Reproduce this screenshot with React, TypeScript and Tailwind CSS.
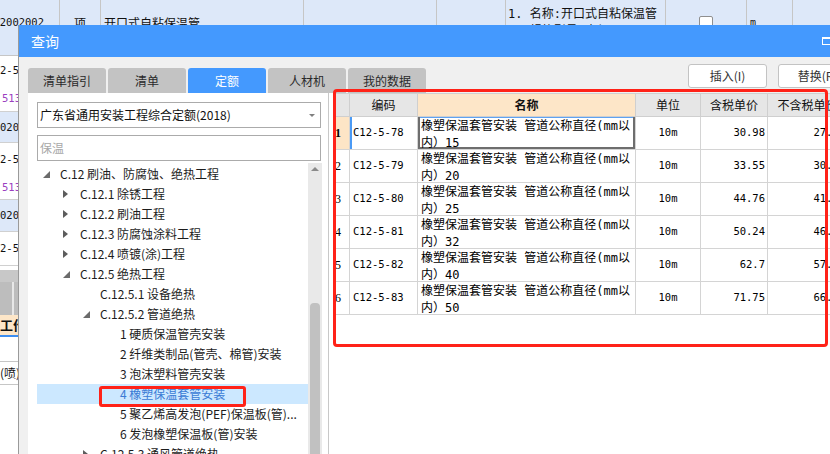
import React from 'react';

type TreeItem = { label: string; level: number; arrow?: 'open' | 'closed'; active?: boolean };

const TREE: TreeItem[] = [
  { label: 'C.12 刷油、防腐蚀、绝热工程', level: 0, arrow: 'open' },
  { label: 'C.12.1 除锈工程', level: 1, arrow: 'closed' },
  { label: 'C.12.2 刷油工程', level: 1, arrow: 'closed' },
  { label: 'C.12.3 防腐蚀涂料工程', level: 1, arrow: 'closed' },
  { label: 'C.12.4 喷镀(涂)工程', level: 1, arrow: 'closed' },
  { label: 'C.12.5 绝热工程', level: 1, arrow: 'open' },
  { label: 'C.12.5.1 设备绝热', level: 2 },
  { label: 'C.12.5.2 管道绝热', level: 2, arrow: 'open' },
  { label: '1 硬质保温管壳安装', level: 3 },
  { label: '2 纤维类制品(管壳、棉管)安装', level: 3 },
  { label: '3 泡沫塑料管壳安装', level: 3 },
  { label: '4 橡塑保温套管安装', level: 3, active: true },
  { label: '5 聚乙烯高发泡(PEF)保温板(管)...', level: 3 },
  { label: '6 发泡橡塑保温板(管)安装', level: 3 },
  { label: 'C.12.5.3 通风管道绝热', level: 2, arrow: 'closed' },
];

// one class per tree depth, 20px per level
const INDENT = ['pl-[6px]', 'pl-[26px]', 'pl-[46px]', 'pl-[66px]'];

const ROWS = [
  { code: 'C12-5-78', size: '15', tax: '30.98', noTax: '27.91' },
  { code: 'C12-5-79', size: '20', tax: '33.55', noTax: '30.23' },
  { code: 'C12-5-80', size: '25', tax: '44.76', noTax: '41.06' },
  { code: 'C12-5-81', size: '32', tax: '50.24', noTax: '46.09' },
  { code: 'C12-5-82', size: '40', tax: '62.7', noTax: '57.52' },
  { code: 'C12-5-83', size: '50', tax: '71.75', noTax: '66.13' },
];

const TABS = ['清单指引', '清单', '定额', '人材机', '我的数据'];

const mono = "font-['DejaVu_Sans_Mono','Noto_Sans_CJK_SC',monospace]";

function TreeArrow({ kind }: { kind?: 'open' | 'closed' }) {
  if (kind === 'open')
    return (
      <svg width="7" height="7" viewBox="0 0 7 7" className="mt-[1px]">
        <polygon points="7,0 7,7 0,7" fill="#6b6b6b" />
      </svg>
    );
  if (kind === 'closed')
    return (
      <svg width="5" height="8" viewBox="0 0 5 8">
        <polygon points="0,0 5,4 0,8" fill="#5c5c5c" />
      </svg>
    );
  return null;
}

function Background() {
  const cell = 'h-full border-r border-[#c6c6c6]';
  return (
    <div className="flex flex-col w-full">
      {/* partly hidden row above the dialog */}
      <div className="flex h-[56px] bg-[#dde8f9] border-b border-[#c6c6c6] text-[12px] leading-[17px]">
        <div className={`${cell} w-[60px] pt-[14px] overflow-hidden flex justify-end items-start pr-[15px] ${mono} text-[10.5px]`}>
          <span className="shrink-0 whitespace-nowrap">0302002002</span>
        </div>
        <div className={`${cell} w-[41px] pt-[14px] text-center`}>项</div>
        <div className={`${cell} w-[203px] pt-[14px] pl-[3px]`}>开口式自粘保温管</div>
        <div className={`${cell} w-[133px]`} />
        <div className={`${cell} w-[69px]`} />
        <div className={`${cell} w-[160px] pt-[6px] pl-[2px] ${mono} text-[12px]`}>
          <div>1. 名称:开口式自粘保温管</div>
          <div>2. 规格型号:内径 厚</div>
        </div>
        <div className={`${cell} w-[81px] pt-[16px]`}>
          <div className="mx-auto w-[14px] h-[14px] bg-white border border-[#8f8f8f] rounded-[2px]" />
        </div>
        <div className={`${cell} w-[46px] pt-[14px] pl-[3px] ${mono} text-[10px]`}>m</div>
        <div className="flex-1" />
      </div>
      <div className={`h-[56px] border-b border-[#d0d0d0] ${mono} text-[10.5px] leading-[28px]`}>
        <div>2-5-78</div>
        <div className="pl-[2px] text-[#9b3fbf]">5130101</div>
      </div>
      <div className={`h-[31px] bg-[#dde8f9] border-b border-[#d0d0d0] ${mono} text-[10.5px] leading-[30px]`}>02002001</div>
      <div className={`h-[57px] border-b border-[#d0d0d0] ${mono} text-[10.5px] leading-[28px] pt-[2px]`}>
        <div>2-5-79</div>
        <div className="pl-[2px] text-[#9b3fbf]">5130102</div>
      </div>
      <div className={`h-[32px] bg-[#dde8f9] border-b border-[#d0d0d0] ${mono} text-[10.5px] leading-[30px]`}>02002003</div>
      <div className={`h-[34px] border-b border-[#d0d0d0] ${mono} text-[10.5px] leading-[32px]`}>2-5-80</div>
      <div className="h-[4px]" />
      <div className="h-[12px] bg-[#c8c8c8]" />
      <div className="h-[33px] bg-[#bdbdbd] pl-[12px]">
        <div className="w-[2px] h-full bg-[#e8e8e8]" />
      </div>
      <div className="h-[22px] bg-[#fde6c8] border-b-2 border-[#3d8ef0] text-[13px] font-bold leading-[20px]">工作内容</div>
      <div className="h-[24px]" />
      <div className="h-[24px] border-y border-[#c6c6c6] text-[12px] leading-[22px]">(喷)涂</div>
    </div>
  );
}

function TreePanel() {
  return (
    <div className="w-[300px] h-full bg-white flex flex-col pl-[9px] pr-[6px] pt-[9px]">
      <div className="h-[26px] mr-[1px] border border-[#ababab] flex items-center pl-[2px] pr-[5px] text-[12px] text-[#111]">
        <span className="flex-1">广东省通用安装工程综合定额(2018)</span>
        <svg width="6" height="3" viewBox="0 0 6 3">
          <polygon points="0,0 6,0 3,3" fill="#808080" />
        </svg>
      </div>
      <div className="h-[26px] mt-[7px] mr-[1px] border border-[#ababab] flex items-center pl-[2px] text-[12px] text-[#a8a8a8]">
        保温
      </div>
      <div className="flex-1 flex mt-[2px] min-h-0">
        <div className="flex-1 pt-[1px] overflow-hidden">
          {TREE.map((t) => (
            <div
              key={t.label}
              className={`flex items-center h-[20px] ${INDENT[t.level]} ${t.active ? 'bg-[#cce8ff] text-[#3a7bd5]' : 'text-[#1c1c1c]'}`}
            >
              <span className="w-[17px] flex items-center">
                <TreeArrow kind={t.arrow} />
              </span>
              <span className="text-[12px] whitespace-nowrap">{t.label}</span>
            </div>
          ))}
        </div>
        {/* scrollbar */}
        <div className="w-[14px] bg-[#e9e9e9] flex flex-col items-center">
          <svg width="8" height="4" viewBox="0 0 8 4" className="mt-[4px]">
            <polygon points="4,0 8,4 0,4" fill="#8a8a8a" />
          </svg>
          <div className="h-[132px]" />
          <div className="flex-1 w-[10px] bg-[#c1c1c1] rounded-t-[4px]" />
        </div>
      </div>
    </div>
  );
}

function QuotaGrid() {
  const hd = 'h-full flex items-center justify-center border-r border-[#cfcfcf]';
  const td = 'h-full border-r border-[#d4d4d4]';
  return (
    <div className="flex-1 h-full bg-white border-l border-[#c8c8c8] pl-[5px]">
      <div className="flex h-[24px] border-y border-[#cfcfcf] bg-[#e6e6e6] text-[12px] text-[#111]">
        <div className={`${hd} w-[16px]`} />
        <div className={`${hd} w-[68px]`}>编码</div>
        <div className={`${hd} w-[218px] bg-[#fde6c8] font-bold`}>名称</div>
        <div className={`${hd} w-[65px]`}>单位</div>
        <div className={`${hd} w-[67px]`}>含税单价</div>
        <div className={`${hd} w-[80px] whitespace-nowrap`}>不含税单价</div>
      </div>
      {ROWS.map((r, i) => {
        const first = i === 0;
        return (
          <div key={r.code} className="flex h-[33px] border-b border-[#d4d4d4] text-black">
            <div
              className={`${td} w-[16px] flex items-center pl-[1px] font-['Liberation_Serif',serif] text-[12px] ${first ? 'bg-[#fde5c6] font-bold' : ''}`}
            >
              {i + 1}
            </div>
            <div
              className={`${td} w-[68px] flex items-center pl-[3px] ${mono} text-[10.5px] ${first ? 'shadow-[inset_2px_0_0_#4a9af5]' : ''}`}
            >
              {r.code}
            </div>
            <div
              className={`${td} w-[218px] pl-[3px] pt-[1px] ${mono} text-[12px] leading-[17px] whitespace-nowrap overflow-hidden ${first ? 'shadow-[inset_2px_-2px_0_#6e6e6e,inset_-2px_0_0_#6e6e6e,inset_0_1px_0_#5ea2f2]' : ''}`}
            >
              <div>橡塑保温套管安装 管道公称直径(mm以</div>
              <div>内）{r.size}</div>
            </div>
            <div className={`${td} w-[65px] flex items-center justify-center ${mono} text-[10.5px]`}>10m</div>
            <div className={`${td} w-[67px] flex items-center justify-end pr-[2px] ${mono} text-[10.5px]`}>{r.tax}</div>
            <div className={`${td} w-[80px] flex items-center justify-end pr-[2px] ${mono} text-[10.5px]`}>{r.noTax}</div>
          </div>
        );
      })}
    </div>
  );
}

export default function App() {
  return (
    <div className="relative w-[830px] h-[454px] overflow-hidden bg-white font-['Noto_Sans_CJK_SC',sans-serif] text-[#111]">
      <Background />

      {/* 查询 dialog */}
      <div className="absolute left-[18px] top-[25px] w-[831px] h-[429px] border-l border-[#9a9a9a] bg-[#f0f0f0] flex flex-col">
        <div className="h-[32px] shrink-0 bg-[#4499fe] flex items-center pl-[12px] pr-[15px]">
          <span className="text-white text-[14px]">查询</span>
          <div className="ml-auto w-[12px] h-[8px] border border-white border-t-2" />
        </div>

        <div className="flex-1 flex flex-col pl-[9px] min-h-0">
          <div className="h-[36px] shrink-0 flex">
            <div className="flex gap-[2px] self-end">
              {TABS.map((t) => (
                <div
                  key={t}
                  className={`w-[78px] h-[25px] rounded-t-[3px] flex items-center justify-center text-[12px] ${
                    t === '定额' ? 'bg-[#4499fe] text-white' : 'bg-[#c3c3c3] text-[#2a2a2a]'
                  }`}
                >
                  {t}
                </div>
              ))}
            </div>
            <div className="flex gap-[11px] ml-[262px] mt-[7px] self-start">
              <button className="w-[79px] h-[24px] bg-white border border-[#c3c3c3] rounded-[3px] text-[12px] text-[#333]">
                插入(I)
              </button>
              <button className="w-[79px] h-[24px] bg-white border border-[#c3c3c3] rounded-[3px] text-[12px] text-[#333]">
                替换(R)
              </button>
            </div>
          </div>

          <div className="flex-1 flex min-h-0">
            <TreePanel />
            <QuotaGrid />
          </div>
        </div>
      </div>

      {/* red annotation boxes */}
      <div className="absolute left-[333px] top-[89px] w-[495px] h-[258px] border-[3px] border-[#ff2218] rounded-[4px]" />
      <div className="absolute left-[99px] top-[386px] w-[147px] h-[21px] border-[3px] border-[#ff2218] rounded-[3px]" />
    </div>
  );
}
